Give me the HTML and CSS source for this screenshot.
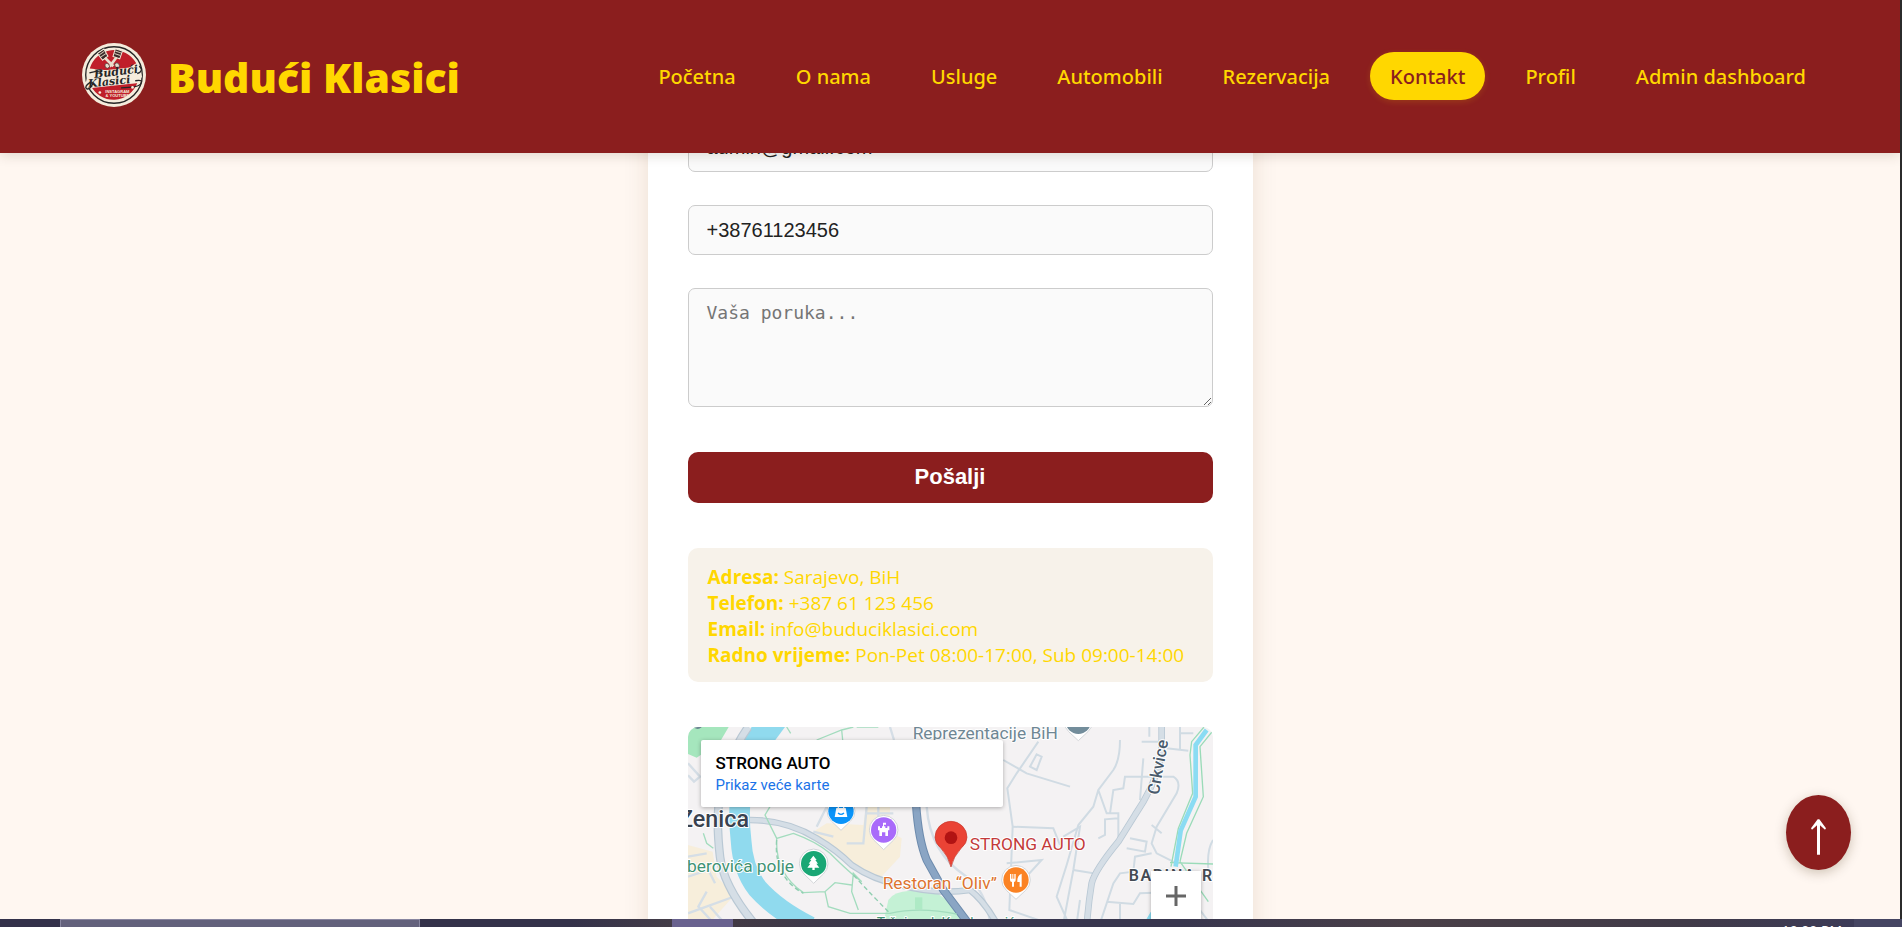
FILE: index.html
```
<!DOCTYPE html>
<html lang="bs">
<head>
<meta charset="utf-8">
<title>Budući Klasici – Kontakt</title>
<link rel="stylesheet" href="styles.css">
</head>
<body>
<div class="page">
  <header class="header">
    <a class="brand" href="#">
      <svg class="brand-logo" viewBox="0 0 190 190" aria-hidden="true">
        <circle cx="95" cy="95" r="95" fill="#f5ecdc"/>
        <circle cx="95" cy="95" r="84" fill="none" stroke="#262626" stroke-width="4"/>
        <path d="M23 76A75 75 0 0 1 161 60L128 80H66Z" fill="#c01f2a"/>
        <path d="M26 126L164 119A75 75 0 0 1 26 126Z" fill="#c01f2a"/>
        <g stroke="#f5ecdc" stroke-width="3" fill="#3a2a2a">
          <path d="M46 31L65 18L77 39L61 51Z"/>
          <path d="M99 17L120 24L112 47L92 40Z"/>
        </g>
        <g stroke="#d7c8b8" stroke-width="3">
          <path d="M50 36L66 25M55 42L72 31M99 24L117 30M96 31L114 37"/>
        </g>
        <path d="M68 44L93 69M102 43L82 70" fill="none" stroke="#e9ddcc" stroke-width="8"/>
        <path d="M68 64q6-8 12 0t-4 11q-9 0-8-11M97 62q7-7 13 1t-5 11q-9-1-8-12" fill="#e9ddcc" stroke="#3a2a2a" stroke-width="2"/>
        <path d="M20 87Q90 78 170 70L178 100L166 119L22 134L8 128Z" fill="#f5ecdc"/>
        <text class="logo-script" x="37" y="104" transform="rotate(-7 37 104)">Budući</text>
        <text class="logo-script" x="19" y="132" transform="rotate(-6 19 132)">Klasici</text>
        <path d="M22 89Q45 82 58 84M170 68Q185 83 164 91M158 112Q184 107 174 122Q166 132 116 133M25 116Q5 130 14 136Q24 139 32 121" fill="none" stroke="#262626" stroke-width="4"/>
        <text class="logo-small" x="105" y="147">INSTAGRAM</text>
        <text class="logo-small" x="105" y="160">&amp; YOUTUBE</text>
        <circle cx="53" cy="147" r="4" fill="#f5ecdc"/><circle cx="150" cy="132" r="4" fill="#f5ecdc"/>
      </svg>
      <span class="brand-name">Budući Klasici</span>
    </a>
    <nav class="nav">
      <a href="#">Početna</a>
      <a href="#">O nama</a>
      <a href="#">Usluge</a>
      <a href="#">Automobili</a>
      <a href="#">Rezervacija</a>
      <a class="active" href="#" aria-current="page">Kontakt</a>
      <a href="#">Profil</a>
      <a href="#">Admin dashboard</a>
    </nav>
  </header>

  <main class="card">
    <form class="form">
      <input class="field" type="email" aria-label="Email" value="admin@gmail.com">
      <input class="field" type="tel" aria-label="Telefon" value="+38761123456">
      <textarea class="field message" aria-label="Poruka" placeholder="Vaša poruka..."></textarea>
      <button class="send" type="submit">Pošalji</button>
    </form>

    <section class="info">
      <p><strong>Adresa:</strong> Sarajevo, BiH</p>
      <p><strong>Telefon:</strong> +387 61 123 456</p>
      <p><strong>Email:</strong> info@buduciklasici.com</p>
      <p><strong>Radno vrijeme:</strong> Pon-Pet 08:00-17:00, Sub 09:00-14:00</p>
    </section>

    <section class="map">
      <svg class="map-canvas" viewBox="54 51 1575 620" aria-label="Karta">
        <rect x="54" y="51" width="1575" height="620" fill="#f4f2f3"/>
        <!-- parks and built-up blocks -->
        <path d="M54 51H176L150 95L80 143L54 132Z" fill="#a5e6bd"/>
        <circle cx="83" cy="42" r="15" fill="#6b8291"/>
        <path d="M54 405L128 425L140 500L195 555L180 570L118 640H54Z" fill="#f7eedb"/>
        <path d="M430 365L470 340L580 345L588 285H660V365L695 385L690 440L625 510L580 490Z" fill="#f7eedb"/>
        <path d="M655 570Q670 545 720 542L800 548Q860 590 900 640H640Z" fill="#c4f1d5"/>
        <path d="M735 562h22v36h-22z" fill="#aeeac5"/>
        <!-- river -->
        <path d="M295 40Q250 85 225 170Q200 280 213 390Q218 480 262 535Q320 600 420 650" fill="none" stroke="#90daee" stroke-width="62"/>
        <path d="M245 51L345 51L312 95H232Z" fill="#90daee"/>
        <!-- minor streets -->
        <g fill="none" stroke="#d5dee6" stroke-width="7">
          <path d="M54 160L90 200L72 215L54 196M54 500L115 480L135 520M54 610L205 555M110 545L85 590L150 660M54 440L110 430M120 590L155 630"/>
          <path d="M530 400H580L590 290M590 310H670M625 290V340M430 365L490 380M440 350L470 290M770 290Q780 430 890 500Q950 545 960 640M660 51L672 90"/>
        </g>
        <g fill="none" stroke="#d0dbe3" stroke-width="6">
          <path d="M1000 150L1070 190L1200 230M1105 95L1040 190L1012 235L1028 350L1018 600L1120 635M1100 133L1115 140L1100 180L1080 170Z"/>
          <path d="M1350 90Q1350 150 1330 180L1285 240L1270 290L1225 345L1190 465L1160 560L1200 650M1285 240L1310 310H1345V400M1028 350L1150 355L1170 405M1345 325L1305 328V375L1285 385M1180 380L1230 350L1210 480L1180 640"/>
          <path d="M1320 310L1330 240L1360 235L1365 200H1510Q1535 215 1520 250L1460 350L1445 400L1460 430L1520 460M1445 345L1475 370M1420 145L1410 270M1380 385L1430 395L1425 425L1370 415M1445 430L1395 440L1390 485L1350 490L1330 520L1290 640M1415 95H1490M1438 51V80M1490 115L1555 122M1530 51V120M1528 70L1570 70M1629 390Q1610 420 1615 480M1210 480L1270 490M1010 460L1115 450L1060 510L1020 540M1310 575L1390 582L1410 550L1450 548M1350 580V640M1230 570L1220 640M1590 600L1620 640"/>
        </g>
        <!-- main streets -->
        <g fill="none" stroke="#b9c8d4" stroke-linejoin="round">
          <path d="M235 51Q185 120 155 230Q135 310 150 440Q160 530 260 650" stroke-width="26"/>
          <path d="M240 330Q350 330 440 385Q500 420 545 465Q610 510 690 525Q800 555 900 540Q940 570 980 640" stroke-width="20"/>
          <path d="M1475 51V130Q1460 220 1395 315L1345 395Q1275 480 1265 520Q1255 580 1250 650" stroke-width="20"/>
        </g>
        <g fill="none" stroke="#d5dee6" stroke-linejoin="round">
          <path d="M235 51Q185 120 155 230Q135 310 150 440Q160 530 260 650" stroke-width="19"/>
          <path d="M240 330Q350 330 440 385Q500 420 545 465Q610 510 690 525Q800 555 900 540Q940 570 980 640" stroke-width="13"/>
          <path d="M1475 51V130Q1460 220 1395 315L1345 395Q1275 480 1265 520Q1255 580 1250 650" stroke-width="15"/>
        </g>
        <path d="M738 280Q745 390 770 450L820 540L895 640" fill="none" stroke="#6d8bad" stroke-width="25"/>
        <path d="M738 280Q745 390 770 450L820 540L895 640" fill="none" stroke="#8aa5c4" stroke-width="19"/>
        <!-- footpaths -->
        <g fill="none" stroke="#a3dcbe" stroke-width="4">
          <path d="M300 290L285 315L320 385L370 370Q440 395 480 430Q540 490 575 515L550 490L545 545L565 600M320 385Q315 490 400 548L465 545L495 518L545 525M465 545L475 590L540 610H660Q750 590 860 612M440 90L515 60L550 51M515 60L518 90M350 51L362 70M560 51H625M100 370L110 400L130 415"/>
          <path d="M1602 51L1565 95L1560 135L1568 250L1525 355L1503 470M1629 62L1590 110L1600 260L1550 370L1530 455M1500 458L1629 462M1530 455L1615 575M1450 600L1425 640" stroke="#9adbb8"/>
        </g>
        <path d="M320 390Q310 500 400 550M550 495Q610 560 660 610" fill="none" stroke="#8fceb0" stroke-width="4" stroke-dasharray="14 9"/>
        <path d="M1610 60L1577 105V260L1532 362L1517 470M1448 610L1430 640" fill="none" stroke="#8adcf3" stroke-width="14"/>
        <!-- place pins -->
        <g fill="#fff" stroke="#d2d5d8" stroke-width="3">
          <path d="M513 361L484 333A42 42 0 1 1 542 333Z"/>
          <path d="M641 419L612 391A43 43 0 1 1 670 391Z"/>
          <path d="M431 520L402 492A43 43 0 1 1 460 492Z"/>
          <path d="M1038 568L1009 541A43 43 0 1 1 1067 541Z"/>
          <path d="M1225 92L1196 65A43 43 0 1 1 1254 65Z"/>
        </g>
        <circle cx="513" cy="304" r="38" fill="#0a94f9"/>
        <circle cx="641" cy="360" r="38" fill="#a96bfa"/>
        <circle cx="431" cy="461" r="38" fill="#1aa775"/>
        <circle cx="1038" cy="510" r="38" fill="#fb8324"/>
        <circle cx="1225" cy="34" r="38" fill="#738d9b"/>
        <path d="M499 294H527L532 321H494Z" fill="#fff"/>
        <path d="M505 296V288Q513 276 521 288V296" fill="none" stroke="#fff" stroke-width="4"/>
        <path d="M504 309Q513 317 522 309" fill="none" stroke="#0a94f9" stroke-width="4"/>
        <path d="M624 349H630V354H636V349H646V354H652V349H658V361H654V378H646V367H636V378H628V361H624ZM639 338H648V344H642V350H639Z" fill="#fff"/>
        <path d="M430 437L440 450H436L444 461H439L448 473H434V480H427V473H412L421 461H416L424 450H420Z" fill="#fff"/>
        <path d="M1020 492V510Q1020 516 1026 516V530H1032V516Q1037 516 1037 510V492H1033V506H1030V492H1027V506H1024V492ZM1055 491Q1042 496 1042 511V516H1049V530H1055Z" fill="#fff"/>
        <path d="M843 471Q836 440 812 414Q795 400 795 382A48 48 0 0 1 891 382Q891 400 874 414Q850 440 843 471Z" fill="#ea4335" stroke="#c5362b" stroke-width="2"/>
        <circle cx="843" cy="383" r="19" fill="#b11313"/>
        <!-- labels -->
        <g class="map-label">
          <text x="728" y="88" font-size="52" fill="#6f8794">Reprezentacije BiH</text>
          <text x="27" y="352" class="town" font-size="70" fill="#39424f">Zenica</text>
          <text x="372" y="487" text-anchor="end" font-size="52" fill="#3f9273">Saberovića polje</text>
          <text x="899" y="420" font-size="52" fill="#c33a3a">STRONG AUTO</text>
          <text x="638" y="537" font-size="52" fill="#dd7430">Restoran “Oliv”</text>
          <text x="1376" y="512" class="district" font-size="48" fill="#444b54">BABINA R</text>
          <text x="620" y="655" font-size="42" fill="#3f9273">Tržni park Kamberovića</text>
          <text class="town" font-size="50" fill="#4a5b6c" transform="translate(1466 256) rotate(-80)">Crkvice</text>
        </g>
      </svg>
      <div class="map-card">
        <strong>STRONG AUTO</strong>
        <a href="#">Prikaz veće karte</a>
      </div>
      <button class="zoom-in" type="button" aria-label="Uvećaj">
        <svg viewBox="0 0 20 20" width="20" height="20"><path d="M10 0V20M0 10H20" stroke="#666" stroke-width="3"/></svg>
      </button>
    </section>
  </main>

  <button class="to-top" type="button" aria-label="Na vrh">
    <svg viewBox="0 0 45 106" width="15" height="36"><path d="M18 106V18L3 31L0 27L20 0H25L45 27L42 31L27 18V106Z" fill="#fff"/></svg>
  </button>
</div>
<footer class="taskbar">
  <span class="task-start"></span><span class="task-search"></span><span class="task-gap"></span><span class="task-app"></span><span class="task-tray"><time>10:00 PM</time></span><span class="task-end"></span>
</footer>
</body>
</html>
```
FILE: styles.css
```
* { box-sizing: border-box; }

body {
  margin: 0;
  height: 100vh;
  display: flex;
  flex-direction: column;
  overflow: hidden;
  background: #2b2b2b;
  font-family: "Noto Sans", "Open Sans", sans-serif;
}

.page {
  position: relative;
  flex: 1;
  min-height: 0;
  margin-right: 2px;
  overflow: hidden;
  background: #fff7f1;
}

/* Header */
.header {
  position: absolute;
  inset: 0 0 auto;
  z-index: 2;
  display: flex;
  justify-content: space-between;
  align-items: flex-start;
  padding: 43px 74px 46px 82px;
  background: #8b1e1e;
  box-shadow: 0 2px 12px rgba(60, 40, 0, 0.16);
}

.brand {
  display: flex;
  align-items: center;
  gap: 22px;
  color: #ffd700;
  text-decoration: none;
}

.brand-logo { width: 64px; height: 64px; }

.brand-name {
  padding-top: 4px;
  font-size: 41px;
  font-weight: 900;
  line-height: 60px;
  white-space: nowrap;
}

.logo-script {
  font: italic bold 33px "DejaVu Serif", serif;
  fill: #262626;
}

.logo-small {
  font: bold 12px "Liberation Sans", sans-serif;
  fill: #f5ecdc;
  text-anchor: middle;
}

.nav {
  display: flex;
  gap: 20px;
  padding-top: 9px;
}

.nav a {
  padding: 2px 20px 0;
  border-radius: 24px;
  color: #ffd700;
  font-size: 20px;
  font-weight: 500;
  line-height: 46px;
  white-space: nowrap;
  text-decoration: none;
}

.nav .active {
  background: #ffd700;
  color: #8b1e1e;
  box-shadow: 0 2px 6px rgba(255, 215, 0, 0.15);
}

/* Contact card */
.card {
  display: flex;
  flex-direction: column;
  gap: 45px;
  width: 100%;
  max-width: 605px;
  margin: 0 auto;
  padding: 122px 40px 40px;
  background: #fff;
  box-shadow: 0 0 24px rgba(100, 60, 20, 0.12);
}

.form {
  display: flex;
  flex-direction: column;
  gap: 33px;
}

.field {
  width: 100%;
  height: 50px;
  padding: 0 18px;
  border: 1px solid #ccc;
  border-radius: 7px;
  background: #fafafa;
  color: #222;
  font-family: "Liberation Sans", sans-serif;
  font-size: 20px;
}

.message {
  height: 119px;
  padding: 13px 18px;
  font-family: "DejaVu Sans Mono", monospace;
  font-size: 18px;
  resize: vertical;
}

.message::placeholder { color: #757575; }

.send {
  height: 51px;
  margin-top: 12px;
  padding: 0 0 2px;
  border: 0;
  border-radius: 10px;
  background: #8b1e1e;
  color: #fff;
  font: bold 22px "Liberation Sans", sans-serif;
}

.info {
  padding: 16px 20px 14px;
  border-radius: 10px;
  background: #f7f2ea;
  color: #ffd700;
  font-family: "Open Sans", "Noto Sans", sans-serif;
  font-size: 19px;
  line-height: 26px;
}

.info p { margin: 0; }

/* Map */
.map {
  position: relative;
  overflow: hidden;
  border-radius: 10px;
}

.map-canvas { display: block; width: 100%; height: auto; }

.map-label {
  font-family: Roboto, sans-serif;
  stroke: #fff;
  stroke-width: 6px;
  stroke-linejoin: round;
  paint-order: stroke;
}

.town { font-weight: 500; }

.district { font-weight: 600; letter-spacing: 5px; }

.map-card {
  position: absolute;
  top: 13px;
  left: 13px;
  display: flex;
  flex-direction: column;
  width: 302px;
  padding: 12px 15px 11px;
  border-radius: 2px;
  background: #fff;
  box-shadow: 0 1px 4px rgba(0, 0, 0, 0.3);
  font-family: Roboto, sans-serif;
  line-height: 22px;
}

.map-card strong { font-size: 17px; font-weight: 500; }

.map-card a {
  color: #1a73e8;
  font-size: 15px;
  text-decoration: none;
}

.zoom-in {
  position: absolute;
  top: 144px;
  right: 12px;
  width: 50px;
  height: 50px;
  padding: 0;
  border: 0;
  background: #fff;
  box-shadow: 0 1px 4px rgba(0, 0, 0, 0.3);
}

.zoom-in svg { display: block; margin: auto; }

.to-top {
  position: absolute;
  right: 49px;
  bottom: 49px;
  width: 65px;
  height: 75px;
  padding: 8px 0 0;
  border: 0;
  border-radius: 50%;
  background: #8b1e1e;
  box-shadow: 0 3px 12px rgba(60, 40, 0, 0.25);
}

.to-top svg { display: block; margin: auto; }

/* Desktop taskbar edge */
.taskbar {
  display: flex;
  height: 8px;
  overflow: hidden;
  background: #35334a;
}

.task-start { width: 60px; background: #33314a; }
.task-search { width: 360px; border: solid #8886a0; border-width: 1px 1px 0; background: #63617c; }
.task-gap { width: 252px; background: linear-gradient(90deg, #34324a 60%, #433c47); }
.task-app { width: 61px; background: #69628f; }

.task-tray {
  display: flex;
  flex: 1;
  justify-content: flex-end;
  padding: 4px 12px 0;
  background: linear-gradient(90deg, #423a45, #38364e 15%, #38364e 40%, #4a4048 60%, #403a48 85%, #3c3b57);
  color: #fff;
  font: 14px/16px "Open Sans", sans-serif;
}

.task-end { width: 48px; background: #454562; }
```
